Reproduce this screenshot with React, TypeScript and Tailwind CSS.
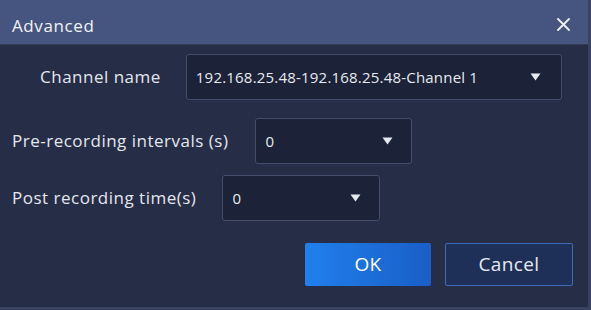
import React from 'react';

const Arrow: React.FC = () => (
  <svg width="11" height="8" viewBox="0 0 11 8" className="shrink-0">
    <path d="M0.5 0.5 H10.5 L5.5 7.5 Z" fill="#e6e9f0" />
  </svg>
);

const Select: React.FC<{ value: string; className: string }> = ({ value, className }) => (
  <div
    className={`flex items-center justify-between h-[46px] rounded-[3px] border border-[#444d6b] bg-[#1c2237] pl-[9px] text-[15px] tracking-[0.2px] text-[#e8eaf0] ${className}`}
  >
    <span>{value}</span>
    <Arrow />
  </div>
);

const App: React.FC = () => {
  return (
    <div
      className="w-[591px] h-[310px] flex flex-col bg-[#262d46] border-r-[3px] border-b-[3px] border-[#3a4262] overflow-hidden"
      style={{ fontFamily: '"Open Sans", "Noto Sans", sans-serif' }}
    >
      {/* Title bar */}
      <div className="h-[45px] shrink-0 flex items-center justify-between bg-[#46557f] pl-[12px] pr-[18px] pt-[8px] border-b border-[#333b58]">
        <span className="text-[17px] tracking-[0.6px] text-[#f1f3f8]">Advanced</span>
        <svg width="13" height="13" viewBox="0 0 13 13" className="mb-[3px]">
          <path d="M1 1 L12 12 M12 1 L1 12" stroke="#eef0f6" strokeWidth="1.8" strokeLinecap="round" />
        </svg>
      </div>

      {/* Body */}
      <div className="flex flex-col pt-[9px] text-[17px] tracking-[0.5px] text-[#e4e7ef]">
        <div className="flex items-center pl-[40px] gap-[25px]">
          <span>Channel name</span>
          <Select value="192.168.25.48-192.168.25.48-Channel 1" className="w-[376px] pr-[20px]" />
        </div>
        <div className="flex items-center pl-[12px] gap-[27px] mt-[18px]">
          <span>Pre-recording intervals (s)</span>
          <Select value="0" className="w-[157px] pr-[18px]" />
        </div>
        <div className="flex items-center pl-[12px] gap-[26px] mt-[11px]">
          <span>Post recording time(s)</span>
          <Select value="0" className="w-[158px] pr-[18px]" />
        </div>

        <div className="flex justify-end gap-[14px] pr-[15px] mt-[22px]">
          <button className="w-[126px] h-[43px] rounded-[2px] bg-gradient-to-r from-[#2080ee] to-[#1a5ec6] text-[19px] tracking-[0.4px] text-white">
            OK
          </button>
          <button className="w-[128px] h-[43px] rounded-[2px] border border-[#3e6cb6] bg-[#1f3058] text-[19px] tracking-[0.4px] text-[#e6e9f0]">
            Cancel
          </button>
        </div>
      </div>
    </div>
  );
};

export default App;
